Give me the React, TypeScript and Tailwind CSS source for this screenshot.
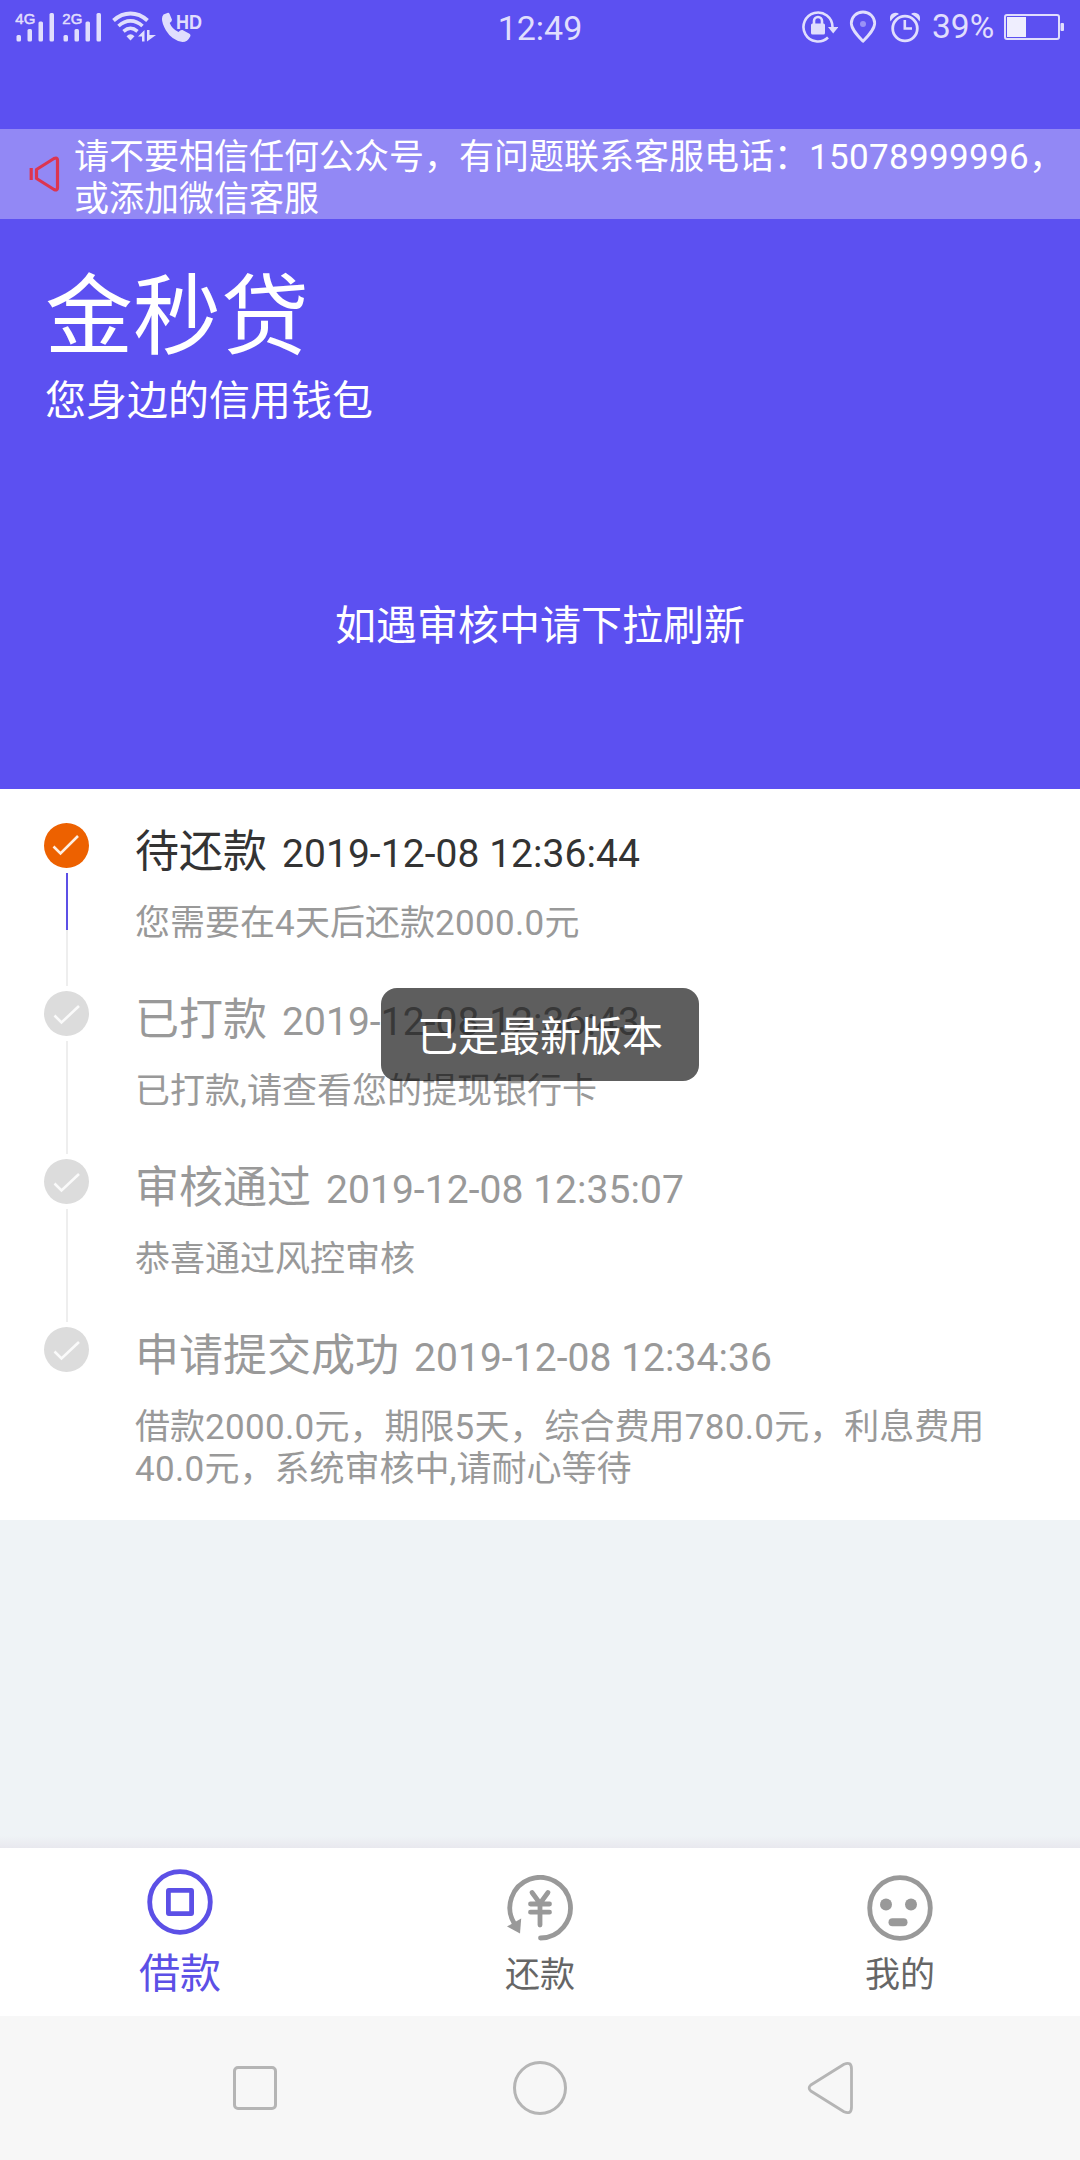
import React from "react";

type Step = { title: string; time: string; lines: string[]; active?: boolean };

const steps: Step[] = [
  { title: "待还款", time: "2019-12-08 12:36:44", lines: ["您需要在4天后还款2000.0元"], active: true },
  { title: "已打款", time: "2019-12-08 12:36:43", lines: ["已打款,请查看您的提现银行卡"] },
  { title: "审核通过", time: "2019-12-08 12:35:07", lines: ["恭喜通过风控审核"] },
  {
    title: "申请提交成功",
    time: "2019-12-08 12:34:36",
    lines: ["借款2000.0元，期限5天，综合费用780.0元，利息费用", "40.0元，系统审核中,请耐心等待"],
  },
];

// Gives the figures inside Chinese text slightly wider tracking.
function Mixed({ text }: { text: string }) {
  return (
    <>
      {text.split(/([\d.]+)/).map((part, i) =>
        /^[\d.]+$/.test(part) ? (
          <span key={i} className="tracking-[0.33px]">
            {part}
          </span>
        ) : (
          part
        ),
      )}
    </>
  );
}

function Signal({ label }: { label: string }) {
  return (
    <svg width="40" height="32" viewBox="0 0 40 32" fill="#e0defd">
      <text x="0.300" y="13" fontSize="14" stroke="#e0defd" strokeWidth="0.500" textLength="20" lengthAdjust="spacingAndGlyphs" fontFamily="Liberation Sans, sans-serif">
        {label}
      </text>
      <rect x="1.500" y="24" width="4.500" height="6.500" rx="1.500" />
      <rect x="12.500" y="18" width="4.500" height="12.500" rx="1.500" />
      <rect x="23.500" y="10.500" width="4.500" height="20" rx="1.500" />
      <rect x="34.500" y="2" width="4.500" height="28.500" rx="1.500" />
    </svg>
  );
}

function StatusBar() {
  return (
    <div className="grid h-14 grid-cols-[1fr_auto_1fr] text-[#e0defd]">
      <div className="flex items-start pl-[15px] pt-[11px]">
        <Signal label="4G" />
        <div className="w-[7px]" />
        <Signal label="2G" />
        <svg className="ml-[9px]" width="46" height="32" viewBox="0 0 46 32" fill="none" stroke="#e0defd">
          <path d="M2.500 9.500 C13 0.200 26 0.200 36.500 9.500" strokeWidth="4" />
          <path d="M7.500 15 C15 8.200 24 8.200 31.500 15" strokeWidth="3.600" />
          <path d="M12.500 20.300 C17.500 16.200 21.500 16.200 26.500 20.300" strokeWidth="3.600" />
          <path d="M15.500 25.200 Q19.500 21.500 23.500 25.200 L19.500 29.500Z" fill="#e0defd" stroke="none" />
          <path d="M27 25.500 L33.500 19 V30.500 H31 V25.500Z M36 19 V30.500 L45 24 H38.500 V19Z" fill="#e0defd" stroke="none" />
        </svg>
        <svg className="ml-[4px]" width="44" height="34" viewBox="0 0 44 34" fill="#e0defd">
          <path d="M2.500 3.500 L7 1.800 Q8 1.700 8.600 3 L11 8.800 Q11 10.500 8.700 12 Q11 18 17.500 21 Q19.500 18.500 21.500 19 L28.500 22.800 Q30 24 29.200 25.500 Q26.500 31 21.500 31 Q11 29.500 5 19.500 Q-1.500 8 2.500 3.500Z" />
          <text x="15" y="17.500" fontSize="20" fontWeight="700" textLength="26" lengthAdjust="spacingAndGlyphs" fontFamily="Liberation Sans, sans-serif">
            HD
          </text>
        </svg>
      </div>
      <div className="pt-2 text-[34px] leading-10">12:49</div>
      <div className="flex items-start justify-end pr-[15px] pt-[10px]">
        <svg width="37" height="34" viewBox="0 0 37 34" fill="none" stroke="#e0defd" strokeWidth="2.600">
          <path d="M31.500 17 A14.500 14.500 0 1 0 27 27.500" />
          <path d="M27 17 H37.500 L32.200 23.500Z" fill="#e0defd" stroke="none" />
          <rect x="10" y="13.500" width="14" height="11" rx="1.500" fill="#e0defd" stroke="none" />
          <path d="M13 14 V11 A4 4 0 0 1 21 11 V14" />
        </svg>
        <svg className="ml-[11px]" width="28" height="34" viewBox="0 0 28 34" fill="none" stroke="#e0defd" strokeWidth="2.800">
          <path d="M14 31.300 C8 25 2.300 19 2.300 13.300 A11.700 11.300 0 0 1 25.700 13.300 C25.700 19 20 25 14 31.300Z" strokeLinejoin="round" />
          <circle cx="14" cy="14" r="3" fill="#9a92f6" stroke="none" />
        </svg>
        <svg className="ml-[12px]" width="32" height="34" viewBox="0 0 32 34" fill="none" stroke="#e0defd" strokeWidth="2.800">
          <circle cx="16" cy="18.500" r="12.300" />
          <path d="M15.800 10 V18.500 H23" strokeWidth="2.600" />
          <path d="M1.500 11.500 Q-0.500 4.500 5 3 Q8 2.300 10 4 Q4.500 6.500 1.500 11.500Z M30.500 11.500 Q32.500 4.500 27 3 Q24 2.300 22 4 Q27.500 6.500 30.500 11.500Z" fill="#e0defd" stroke="none" />
        </svg>
        <div className="-mt-[3px] ml-[11px] w-[63px] whitespace-nowrap text-[33.500px] leading-10">39%</div>
        <svg className="ml-[9px]" width="61" height="34" viewBox="0 0 61 34" fill="none">
          <rect x="1" y="5" width="54" height="24" rx="2" stroke="#e0defd" strokeWidth="2" />
          <rect x="3" y="7" width="19" height="20" fill="#efeefe" />
          <rect x="56.500" y="13" width="3.500" height="8" rx="1" fill="#e0defd" />
        </svg>
      </div>
    </div>
  );
}

function Header() {
  return (
    <header className="h-[789px] bg-[#5c50f1] text-white">
      <StatusBar />
      <div className="mt-[73px] flex h-[90px] bg-[#9288f5] pt-[8px]">
        <svg className="ml-[29px] mt-[18px]" width="32" height="38" viewBox="0 0 32 38" fill="none" stroke="#dc3551" strokeWidth="3.200">
          <path d="M7.500 14.500 L25 3.500 Q28.500 2 28.500 5 V33 Q28.500 36 25 34.500 L7.500 23.500Z" strokeLinejoin="round" />
          <path d="M2.200 13 V25" strokeWidth="3.200" />
        </svg>
        <p className="ml-[13px] whitespace-nowrap text-[35px] leading-[42px]">
          <Mixed text="请不要相信任何公众号，有问题联系客服电话：15078999996，" />
          <br />
          或添加微信客服
        </p>
      </div>
      <h1 className="ml-[45px] mt-[45px] text-[88px] leading-[106px]">金秒贷</h1>
      <p className="ml-[45px] mt-[6px] text-[41px] leading-[50px]">您身边的信用钱包</p>
      <p className="mt-[175px] text-center text-[41px] leading-[50px]">如遇审核中请下拉刷新</p>
    </header>
  );
}

function TimelineItem({ step, last }: { step: Step; last: boolean }) {
  return (
    <li className={last ? "flex" : "flex h-[168px]"}>
      <div className="flex w-[134px] flex-col items-center">
        <svg className="mr-px shrink-0" width="45" height="45" viewBox="0 0 45 45" fill="none">
          <circle cx="22.500" cy="22.500" r="22.500" fill={step.active ? "#ed6100" : "#dcdcdc"} />
          <path
            d={step.active ? "M9.500 23.500 L16.500 30.500 L34 13" : "M10.500 24.500 L17.500 31.500 L35 15"}
            stroke={step.active ? "#fdeee2" : "#fafafa"}
            strokeWidth="2.600"
          />
        </svg>
        {!last && (
          <div className="mt-[5px] flex h-[113px] w-[2px] flex-col bg-[#eeeeee]">
            {step.active && <div className="h-[57px] bg-[#5c50e6]" />}
          </div>
        )}
      </div>
      <div className="ml-px whitespace-nowrap pt-[2px]">
        <div className={step.active ? "flex items-baseline gap-[15px] text-[#333333]" : "flex items-baseline gap-[15px] text-[#999999]"}>
          <span className="text-[44px] leading-[54px]">{step.title}</span>
          <span className="text-[39px] leading-[54px] tracking-[0.05px]">{step.time}</span>
        </div>
        <div className="mt-[22px] text-[35px] leading-[42px] text-[#999999]">
          {step.lines.map((line) => (
            <div key={line}>
              <Mixed text={line} />
            </div>
          ))}
        </div>
      </div>
    </li>
  );
}

function TabBar() {
  return (
    <nav className="grid h-[168px] grid-cols-3 bg-white">
      <div className="flex flex-col items-center pt-[21px] text-[#5c50e6]">
        <svg width="66" height="66" viewBox="0 0 66 66" fill="none" stroke="currentColor" strokeWidth="4.800">
          <circle cx="33" cy="33" r="30.300" />
          <rect x="21.400" y="21.400" width="23.200" height="23.200" rx="0.500" strokeLinejoin="round" />
        </svg>
        <span className="mt-[14px] text-[41px] leading-[50px]">借款</span>
      </div>
      <div className="flex flex-col items-center pt-[27px]">
        <svg width="66" height="66" viewBox="0 0 66 66" fill="none" stroke="#999999" strokeWidth="4.800" strokeLinecap="round">
          <path d="M33.500 63 A30.300 30.300 0 1 0 7 48" />
          <path d="M0 51.500 L14.200 43.500 L13 58.500Z" fill="#999999" stroke="none" />
          <path d="M25 17.500 L33 28.500 L41 17.500 M23.500 29 H42.500 M23.500 37.200 H42.500 M33 28.500 V50" />
        </svg>
        <span className="mt-[14px] text-[35px] leading-[42px] text-[#666666]">还款</span>
      </div>
      <div className="flex flex-col items-center pt-[27px]">
        <svg width="66" height="66" viewBox="0 0 66 66" fill="#999999">
          <circle cx="33" cy="33" r="30.300" fill="none" stroke="#999999" strokeWidth="4.800" />
          <circle cx="19" cy="29.500" r="6" />
          <circle cx="44" cy="29.500" r="6" />
          <rect x="21.500" y="43.200" width="19" height="8" rx="4" />
        </svg>
        <span className="mt-[14px] text-[35px] leading-[42px] text-[#666666]">我的</span>
      </div>
    </nav>
  );
}

function SystemNav() {
  return (
    <div className="flex h-36 items-center bg-[#f7f7f7] pl-[233px]">
      <div className="size-[44px] rounded-[5px] border-[3px] border-[#b5b5b5]" />
      <div className="ml-[236px] size-[54px] rounded-full border-[3px] border-[#b5b5b5]" />
      <svg className="ml-[240px]" width="48" height="54" viewBox="0 0 48 54" fill="none" stroke="#b5b5b5" strokeWidth="2.800">
        <path d="M3.800 24 L37 3.200 Q44.500 0 44.500 8 V46 Q44.500 54 37 50.800 L3.800 30 Q0.500 27 3.800 24Z" strokeLinejoin="round" />
      </svg>
    </div>
  );
}

export default function App() {
  return (
    <div className="relative flex h-[2160px] w-[1080px] flex-col overflow-hidden bg-[#eff3f6] font-[Roboto,'Noto_Sans_CJK_SC',sans-serif]" lang="zh-CN">
      <Header />
      <ul className="h-[731px] bg-white pt-[34px]">
        {steps.map((step, i) => (
          <TimelineItem key={step.title} step={step} last={i === steps.length - 1} />
        ))}
      </ul>
      <div className="flex-1" />
      <div className="h-[12px] bg-linear-to-b from-[#eff3f6] to-[#e8e8ee]" />
      <TabBar />
      <SystemNav />
      <div className="absolute left-[381px] top-[988px] flex h-[93px] w-[318px] items-center justify-center rounded-[16px] bg-black/63 pt-1 text-[41px] leading-[50px] text-white">
        已是最新版本
      </div>
    </div>
  );
}
